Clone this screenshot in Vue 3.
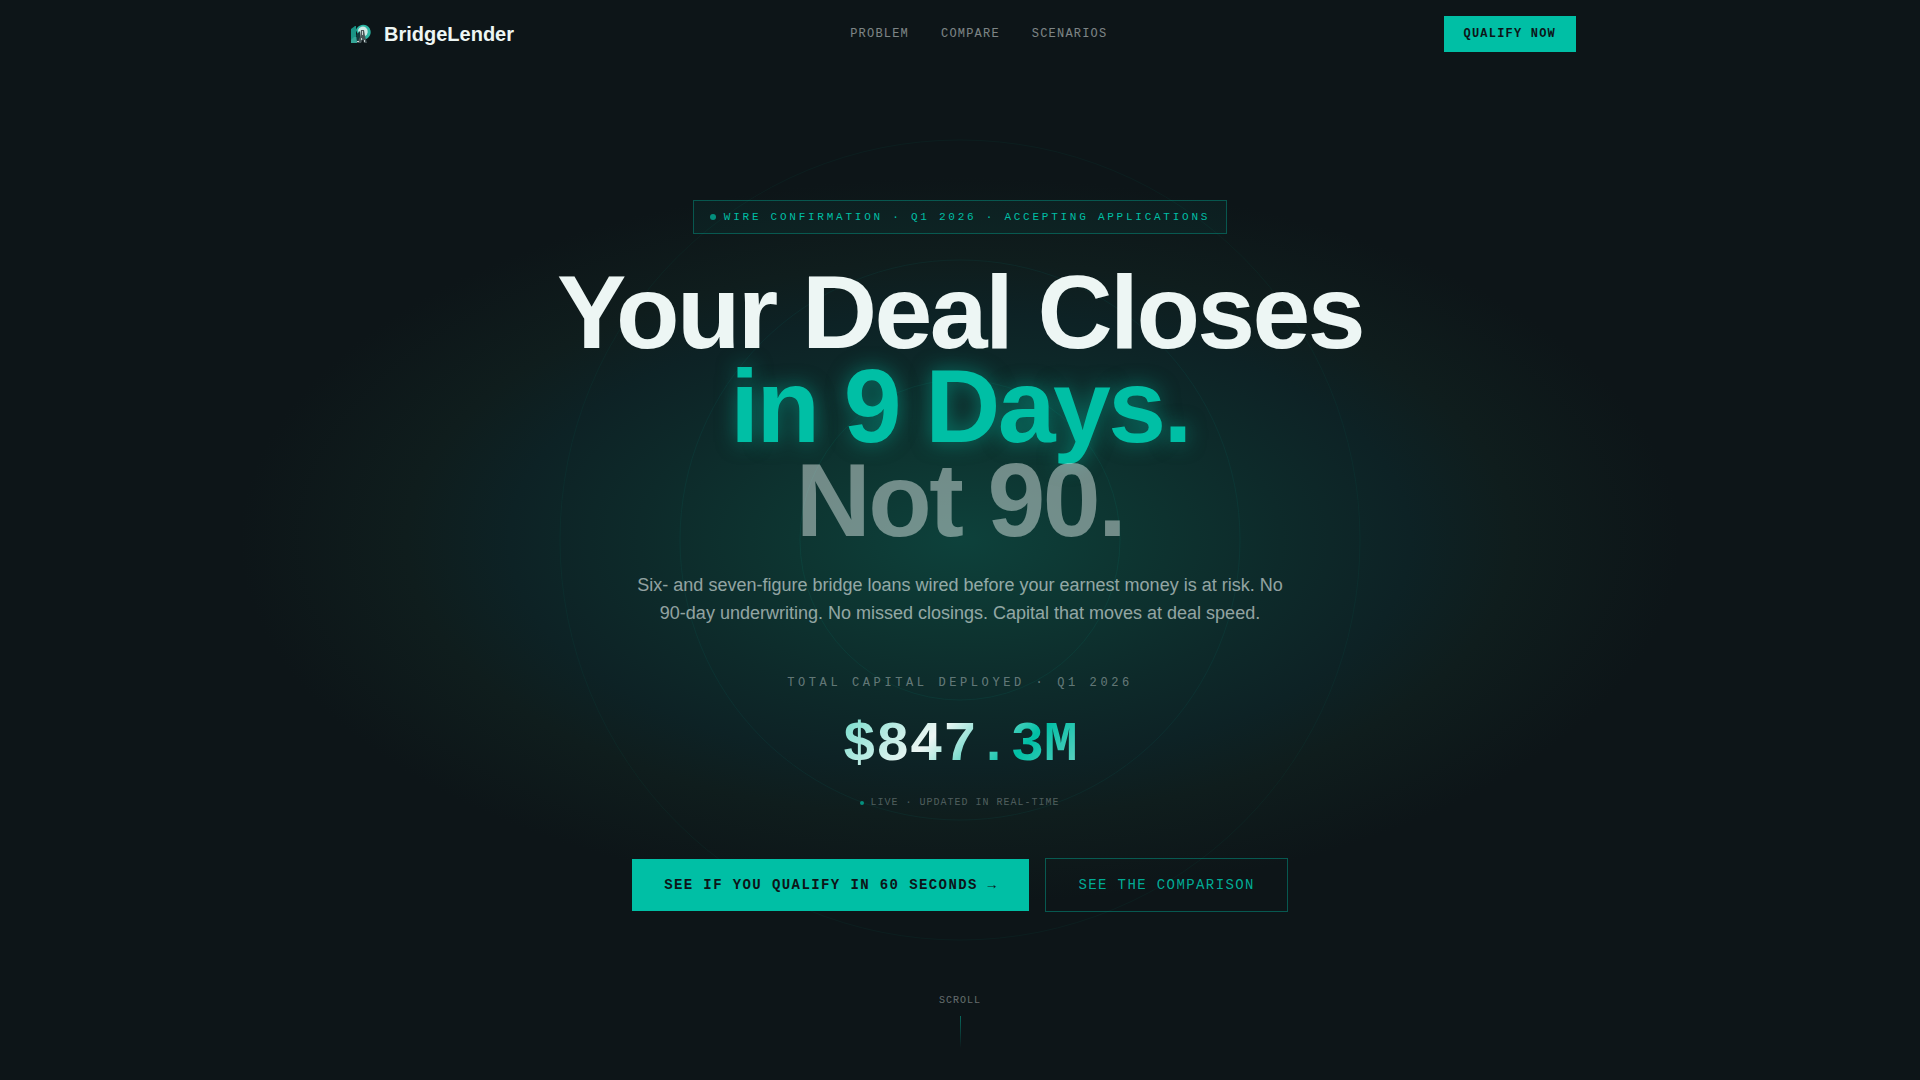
<script setup>
import { ref } from 'vue'

const links = ref([
  { id: 'problem', label: 'Problem' },
  { id: 'compare', label: 'Compare' },
  { id: 'scenarios', label: 'Scenarios' }
])

const rings = [160, 280, 400]
const totalDeployed = ref('$847.3M')
</script>

<template>
  <div class="page">
    <svg class="rings" viewBox="0 0 802 802" aria-hidden="true">
      <circle v-for="r in rings" :key="r" cx="401" cy="401" :r="r" />
    </svg>

    <header class="nav">
      <a class="brand" href="#">
        <svg class="logo" viewBox="0 0 32 32" aria-hidden="true">
          <path d="M7 11l4-3h1v17H7V13z" fill="#1a9385" />
          <path d="M7 22l3-3h3v6H7z" fill="#35a597" />
          <path d="M12 12a7.5 7.5 0 1 1 9 9.5l-2 .5h-3z" fill="#2bb5a3" />
          <path d="M14 12a5 5 0 1 1 7 6l-5 1z" fill="#cfe9e5" />
          <path d="M12 17l4-4v8l-3 3z" fill="#12393b" />
          <path d="M17 12h3l1 6 2 7h-3l-1-4-2 4h-4l3-6z" fill="#4a5759" />
          <path d="M18 13h1v4h-1zM13 23h2v1h-2zM20 22h1v2h-1zM17 20h1v2h-1z" fill="#c9d3d3" />
        </svg>
        <span>BridgeLender</span>
      </a>
      <nav class="links">
        <a v-for="link in links" :key="link.id" :href="'#' + link.id">{{ link.label }}</a>
      </nav>
      <button class="btn btn-small" type="button">Qualify Now</button>
    </header>

    <main class="hero">
      <div class="badge">
        <span class="dot"></span>
        <span>Wire Confirmation · Q1 2026 · Accepting Applications</span>
      </div>

      <h1>
        <span class="line">Your Deal Closes</span>
        <span class="line accent">in 9 Days.</span>
        <span class="line muted">Not 90.</span>
      </h1>

      <p class="lead">
        Six- and seven-figure bridge loans wired before your earnest money is at risk. No
        90-day underwriting. No missed closings. Capital that moves at deal speed.
      </p>

      <p class="label">Total Capital Deployed · Q1 2026</p>
      <p class="total">{{ totalDeployed }}</p>
      <p class="live"><span class="dot dot-small"></span>Live · Updated in real-time</p>

      <div class="actions">
        <button class="btn" type="button">See if you qualify in 60 seconds →</button>
        <a class="btn btn-outline" href="#compare">See the comparison</a>
      </div>
    </main>

    <div class="scroll">
      <span>Scroll</span>
      <span class="scroll-line"></span>
    </div>
  </div>
</template>

<style>
body {
  margin: 0;
  background: #0d1518;
}
</style>

<style scoped>
.page {
  position: relative;
  display: flex;
  flex-direction: column;
  min-height: 100vh;
  overflow: hidden;
  color: #edf6f4;
  font-family: "Liberation Sans", Arial, sans-serif;
  background:
    radial-gradient(
      ellipse 67% 60% at 50% 50%,
      #0d413b 0%,
      #0d3531 13%,
      #0d2a2a 25%,
      #0d2225 35%,
      #0f1d1d 43%,
      transparent 56%
    ),
    #0d1518;
}

.rings {
  position: absolute;
  top: 50%;
  left: 50%;
  width: 802px;
  height: 802px;
  transform: translate(-50%, -50%);
  fill: none;
  stroke: rgba(0, 191, 165, 0.08);
}

.rings circle:nth-child(2) {
  stroke: rgba(0, 191, 165, 0.07);
}

.rings circle:nth-child(3) {
  stroke: rgba(0, 191, 165, 0.05);
}

.nav,
.hero,
.scroll {
  position: relative;
}

.nav {
  display: flex;
  align-items: center;
  justify-content: space-between;
  box-sizing: border-box;
  width: 100%;
  max-width: 1280px;
  margin: 0 auto;
  padding: 16px 24px;
}

.brand {
  display: flex;
  align-items: center;
  gap: 8px;
  color: #edf6f4;
  font-size: 20px;
  font-weight: 700;
  text-decoration: none;
}

.logo {
  width: 32px;
  height: 32px;
}

.links {
  display: flex;
  gap: 32px;
}

.links a {
  color: rgba(237, 246, 244, 0.5);
  font-family: "Liberation Mono", monospace;
  font-size: 12px;
  line-height: 18px;
  letter-spacing: 0.1em;
  text-decoration: none;
  text-transform: uppercase;
}

.btn {
  padding: 16px 32px;
  border: 0;
  background: #00bfa5;
  color: #0d1518;
  font-family: "Liberation Mono", monospace;
  font-size: 14px;
  font-weight: 700;
  line-height: 20px;
  letter-spacing: 0.1em;
  text-decoration: none;
  text-transform: uppercase;
  cursor: pointer;
}

.btn-small {
  padding: 10px 20px;
  font-size: 12px;
  line-height: 16px;
}

.btn-outline {
  border: 1px solid rgba(0, 191, 165, 0.4);
  background: transparent;
  color: rgba(0, 191, 165, 0.9);
  font-weight: 400;
}

.hero {
  display: flex;
  flex: 1;
  flex-direction: column;
  align-items: center;
  padding: 132px 24px 48px;
  text-align: center;
}

.badge {
  display: flex;
  align-items: center;
  gap: 8px;
  padding: 8px 16px;
  border: 1px solid rgba(0, 191, 165, 0.35);
  background: rgba(0, 191, 165, 0.06);
  color: #00bfa5;
  font-family: "Liberation Mono", monospace;
  font-size: 11px;
  line-height: 16px;
  letter-spacing: 0.25em;
  text-transform: uppercase;
}

.dot {
  width: 6px;
  height: 6px;
  border-radius: 50%;
  background: #00bfa5;
  opacity: 0.7;
}

.dot-small {
  width: 4px;
  height: 4px;
}

h1 {
  margin: 31px 0 24px;
  font-size: 104px;
  font-weight: 700;
  line-height: 94px;
  letter-spacing: -0.025em;
}

.line {
  display: block;
}

.accent {
  color: #00bfa5;
  text-shadow: 0 0 20px rgba(0, 191, 165, 0.5);
}

.muted {
  color: rgba(237, 246, 244, 0.45);
}

p {
  margin: 0;
}

.lead {
  max-width: 672px;
  color: rgba(237, 246, 244, 0.6);
  font-size: 18px;
  line-height: 28px;
}

.label {
  margin-top: 48px;
  color: rgba(237, 246, 244, 0.4);
  font-family: "Liberation Mono", monospace;
  font-size: 12px;
  line-height: 16px;
  letter-spacing: 0.3em;
  text-transform: uppercase;
}

.total {
  margin-top: 24px;
  background: linear-gradient(135deg, #73dccb 0%, #edf6f4 38%, #00bfa5 72%, #6fd4c5 100%);
  background-clip: text;
  color: transparent;
  font-family: "Liberation Mono", monospace;
  font-size: 56px;
  font-weight: 700;
  line-height: 60px;
}

.live {
  display: flex;
  align-items: center;
  gap: 6px;
  margin-top: 20px;
  color: rgba(237, 246, 244, 0.3);
  font-family: "Liberation Mono", monospace;
  font-size: 10px;
  line-height: 15px;
  letter-spacing: 0.1em;
  text-transform: uppercase;
}

.actions {
  display: flex;
  flex-wrap: wrap;
  align-items: center;
  justify-content: center;
  gap: 16px;
  margin-top: 48px;
}

.scroll {
  display: flex;
  flex-direction: column;
  align-items: center;
  gap: 8px;
  padding-bottom: 32px;
  color: rgba(237, 246, 244, 0.4);
  font-family: "Liberation Mono", monospace;
  font-size: 10px;
  line-height: 15px;
  letter-spacing: 0.1em;
  text-transform: uppercase;
}

.scroll-line {
  width: 1px;
  height: 32px;
  background: linear-gradient(#00bfa5, transparent);
  opacity: 0.5;
}
</style>
